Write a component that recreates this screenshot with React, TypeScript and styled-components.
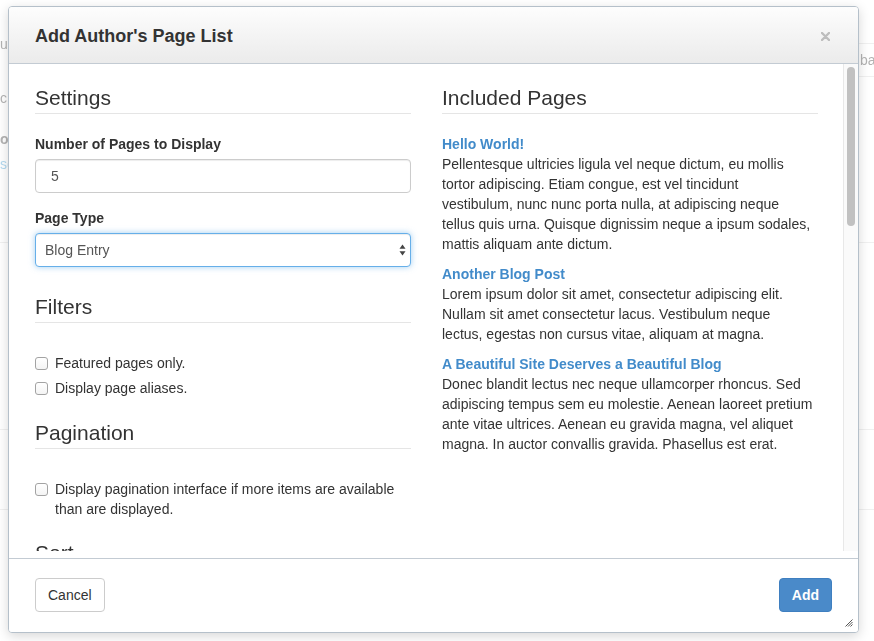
import React from "react";
import styled, { createGlobalStyle } from "styled-components";

const GlobalStyle = createGlobalStyle`
  * { box-sizing: border-box; }
  html, body { margin: 0; padding: 0; }
  body {
    font-family: "Liberation Sans", Arial, sans-serif;
    font-size: 14px;
    line-height: 20px;
    color: #333;
    background: #fff;
    overflow: hidden;
  }
`;

interface Post {
  title: string;
  lines: string[];
}

// lines are kept as the reference wraps them
const posts: Post[] = [
  {
    title: "Hello World!",
    lines: [
      "Pellentesque ultricies ligula vel neque dictum, eu mollis",
      "tortor adipiscing. Etiam congue, est vel tincidunt",
      "vestibulum, nunc nunc porta nulla, at adipiscing neque",
      "tellus quis urna. Quisque dignissim neque a ipsum sodales,",
      "mattis aliquam ante dictum.",
    ],
  },
  {
    title: "Another Blog Post",
    lines: [
      "Lorem ipsum dolor sit amet, consectetur adipiscing elit.",
      "Nullam sit amet consectetur lacus. Vestibulum neque",
      "lectus, egestas non cursus vitae, aliquam at magna.",
    ],
  },
  {
    title: "A Beautiful Site Deserves a Beautiful Blog",
    lines: [
      "Donec blandit lectus nec neque ullamcorper rhoncus. Sed",
      "adipiscing tempus sem eu molestie. Aenean laoreet pretium",
      "ante vitae ultrices. Aenean eu gravida magna, vel aliquet",
      "magna. In auctor convallis gravida. Phasellus est erat.",
    ],
  },
];

const App = () => {
  return (
    <>
      <GlobalStyle />
      <Backdrop>
        <BackRow $height={44} $right />
        <BackRow $height={33} $right>
          <BackText $right>ba</BackText>
        </BackRow>
        <BackSide>
          <BackText>ul</BackText>
          <BackText $gap={34}>c</BackText>
          <BackText $gap={21} $bold>or</BackText>
          <BackText $gap={5} $link>se</BackText>
        </BackSide>
        <BackRow $height={166} />
        <BackRow $height={187} />
        <BackRow $height={80} />
      </Backdrop>

      <Dialog>
        <Header>
          <Title>Add Author's Page List</Title>
          <CloseButton aria-label="Close">
            <svg width="9" height="9" viewBox="0 0 9 9">
              <path
                d="M1 1 L8 8 M8 1 L1 8"
                stroke="#bdbdbd"
                strokeWidth="2.4"
                strokeLinecap="round"
              />
            </svg>
          </CloseButton>
        </Header>

        <Body>
          <Content>
            <Column>
              <Fieldset>
                <Legend>Settings</Legend>
                <FormGroup>
                  <Label>Number of Pages to Display</Label>
                  <TextInput defaultValue="5" />
                </FormGroup>
                <FormGroup>
                  <Label>Page Type</Label>
                  <SelectWrap>
                    <Select $focused defaultValue="blog">
                      <option value="blog">Blog Entry</option>
                      <option value="page">Page</option>
                    </Select>
                    <SelectArrows width="7" height="12" viewBox="0 0 7 12">
                      <path d="M3.5 0.5 L6.5 4.8 L0.5 4.8 Z" fill="#444" />
                      <path d="M3.5 11.5 L6.5 7.2 L0.5 7.2 Z" fill="#444" />
                    </SelectArrows>
                  </SelectWrap>
                </FormGroup>
              </Fieldset>

              <Fieldset $top={10}>
                <Legend>Filters</Legend>
                <CheckRow>
                  <Checkbox type="checkbox" />
                  <span>Featured pages only.</span>
                </CheckRow>
                <CheckRow $follow>
                  <Checkbox type="checkbox" />
                  <span>Display page aliases.</span>
                </CheckRow>
              </Fieldset>

              <Fieldset $top={10}>
                <Legend>Pagination</Legend>
                <CheckRow>
                  <Checkbox type="checkbox" />
                  <span>
                    Display pagination interface if more items are available
                    than are displayed.
                  </span>
                </CheckRow>
              </Fieldset>

              <Fieldset $top={9}>
                <Legend>Sort</Legend>
                <FormGroup>
                  <Select defaultValue="display">
                    <option value="display">Sitemap order</option>
                  </Select>
                </FormGroup>
              </Fieldset>
            </Column>

            <Column>
              <Fieldset>
                <Legend>Included Pages</Legend>
                {posts.map((post) => (
                  <PostItem key={post.title}>
                    <PostLink href="#">{post.title}</PostLink>
                    <PostText>
                      {post.lines.map((line) => (
                        <PostLine key={line}>{line}</PostLine>
                      ))}
                    </PostText>
                  </PostItem>
                ))}
              </Fieldset>
            </Column>
          </Content>

          <ScrollTrack>
            <ScrollThumb />
          </ScrollTrack>
        </Body>

        <Footer>
          <Button>Cancel</Button>
          <Button $primary>Add</Button>
        </Footer>

        <ResizeHandle width="8" height="8" viewBox="0 0 8 8">
          <path
            d="M7.5 0.5 L0.5 7.5 M7.5 3 L3 7.5 M7.5 5.5 L5.5 7.5"
            stroke="#555"
            strokeWidth="1"
          />
        </ResizeHandle>
      </Dialog>
    </>
  );
};

export default App;

const Backdrop = styled.div`
  position: fixed;
  inset: 0;
  background: #fff;
  opacity: 0.45;
  display: flex;
  flex-direction: column;
`;

const BackRow = styled.div<{ $height: number; $right?: boolean }>`
  flex-shrink: 0;
  height: ${(p) => p.$height}px;
  border-bottom: 1px solid #ddd;
  margin-left: ${(p) => (p.$right ? "780px" : "0")};
  display: flex;
  align-items: center;
`;

const BackSide = styled.div`
  position: absolute;
  top: 34px;
  left: 0;
  display: flex;
  flex-direction: column;
`;

const BackText = styled.span<{
  $bold?: boolean;
  $link?: boolean;
  $right?: boolean;
  $gap?: number;
}>`
  display: block;
  margin-left: ${(p) => (p.$right ? "80px" : "0")};
  margin-top: ${(p) => p.$gap ?? 0}px;
  font-weight: ${(p) => (p.$bold ? 700 : 400)};
  color: ${(p) => (p.$link ? "#55aadd" : "#555")};
  white-space: nowrap;
`;

const Dialog = styled.div`
  position: fixed;
  top: 6px;
  left: 8px;
  width: 851px;
  height: 627px;
  background: #fff;
  border: 1px solid #b5c0ca;
  border-radius: 4px;
  box-shadow: 0 3px 12px rgba(0, 0, 0, 0.16);
  display: flex;
  flex-direction: column;
  overflow: hidden;
`;

const Header = styled.div`
  height: 57px;
  flex-shrink: 0;
  display: flex;
  align-items: center;
  justify-content: space-between;
  padding: 0 28px 0 26px;
  background: linear-gradient(to bottom, #fdfdfd 0%, #ebebeb 100%);
  border-bottom: 1px solid #c3cbd3;
`;

const Title = styled.h4`
  margin: 2px 0 0;
  font-size: 18px;
  font-weight: 700;
  color: #333;
`;

const CloseButton = styled.button`
  border: 0;
  background: none;
  padding: 0;
  margin-top: 3px;
  display: flex;
  cursor: pointer;
`;

const Body = styled.div`
  flex: 1;
  min-height: 0;
  display: flex;
  padding-bottom: 7px;
`;

const Content = styled.div`
  flex: 1;
  min-width: 0;
  overflow: hidden;
  padding: 19px 25px 0 26px;
  display: grid;
  grid-template-columns: 376px 376px;
  column-gap: 31px;
  align-items: start;
`;

const ScrollTrack = styled.div`
  width: 15px;
  flex-shrink: 0;
  background: #fafafa;
  border-left: 1px solid #e8e8e8;
  padding: 3px 3px 0 3px;
`;

const ScrollThumb = styled.div`
  height: 159px;
  background: #c1c1c1;
  border-radius: 4px;
`;

const Column = styled.div`
  display: flex;
  flex-direction: column;
`;

const Fieldset = styled.fieldset<{ $top?: number }>`
  margin: ${(p) => p.$top ?? 0}px 0 0;
  padding: 0;
  border: 0;
  min-width: 0;
`;

const Legend = styled.legend`
  display: block;
  width: 100%;
  padding: 0;
  margin-bottom: 20px;
  font-size: 21px;
  line-height: 30px;
  color: #333;
  border-bottom: 1px solid #e5e5e5;
`;

const FormGroup = styled.div`
  margin-bottom: 15px;
`;

const Label = styled.label`
  display: block;
  margin-bottom: 5px;
  font-weight: 700;
`;

const TextInput = styled.input`
  display: block;
  width: 100%;
  height: 34px;
  padding: 6px 15px;
  font: inherit;
  font-size: 14px;
  color: #555;
  background: #fff;
  border: 1px solid #ccc;
  border-radius: 4px;
  box-shadow: inset 0 1px 1px rgba(0, 0, 0, 0.075);
  outline: none;
`;

const SelectWrap = styled.div`
  position: relative;
`;

const Select = styled.select<{ $focused?: boolean }>`
  display: block;
  width: 100%;
  height: 34px;
  padding: 6px 9px;
  font: inherit;
  font-size: 14px;
  color: #555;
  background: #fff;
  appearance: none;
  border: 1px solid ${(p) => (p.$focused ? "#66afe9" : "#ccc")};
  border-radius: 4px;
  box-shadow: ${(p) =>
    p.$focused
      ? "inset 0 1px 1px rgba(0,0,0,.075), 0 0 6px rgba(102,175,233,.6)"
      : "inset 0 1px 1px rgba(0,0,0,.075)"};
  outline: none;
`;

const SelectArrows = styled.svg`
  position: absolute;
  right: 5px;
  top: 11px;
  pointer-events: none;
`;

const CheckRow = styled.label<{ $follow?: boolean }>`
  display: flex;
  align-items: flex-start;
  gap: 7px;
  margin: ${(p) => (p.$follow ? "-5px" : "10px")} 0 10px;
  font-weight: 400;
  line-height: 20px;
`;

const Checkbox = styled.input`
  appearance: none;
  flex-shrink: 0;
  width: 13px;
  height: 13px;
  margin: 4px 0 0;
  background: linear-gradient(#fff, #f4f4f4);
  border: 1px solid #a3a3a3;
  border-radius: 3px;
`;

const PostItem = styled.div`
  margin-bottom: 10px;
`;

const PostLink = styled.a`
  display: block;
  font-weight: 700;
  color: #428bca;
  text-decoration: none;
`;

const PostText = styled.p`
  margin: 0;
  color: #333;
`;

const PostLine = styled.span`
  display: block;
  white-space: nowrap;
`;

const Footer = styled.div`
  flex-shrink: 0;
  display: flex;
  justify-content: space-between;
  align-items: center;
  padding: 19px 26px 20px;
  border-top: 1px solid #c3cbd3;
  background: #fff;
`;

const Button = styled.button<{ $primary?: boolean }>`
  height: 34px;
  padding: 6px 12px;
  font: inherit;
  font-size: 14px;
  font-weight: ${(p) => (p.$primary ? 700 : 400)};
  color: ${(p) => (p.$primary ? "#fff" : "#333")};
  background: ${(p) => (p.$primary ? "#4a8ac9" : "#fff")};
  border: 1px solid ${(p) => (p.$primary ? "#3f7fc0" : "#ccc")};
  border-radius: 4px;
  cursor: pointer;
`;

const ResizeHandle = styled.svg`
  position: absolute;
  right: 5px;
  bottom: 5px;
`;
